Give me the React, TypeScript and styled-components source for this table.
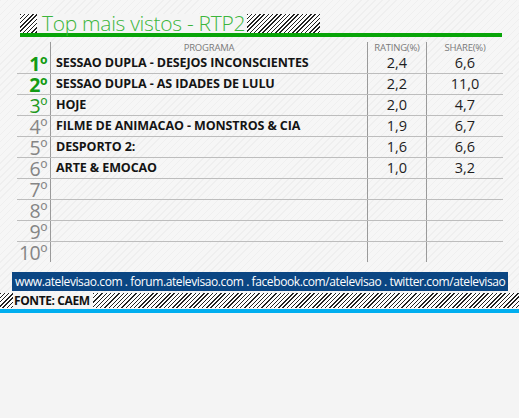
import styled, { createGlobalStyle } from 'styled-components';

const GlobalStyle = createGlobalStyle`
  body {
    margin: 0;
    background: #f4f4f4;
    font-family: 'Open Sans', 'DejaVu Sans', sans-serif;
  }
`;

const hatch = `repeating-linear-gradient(135deg, #222 0px, #222 1px, #fff 1px, #fff 3px)`;

const Page = styled.div`
  width: 519px;
  height: 418px;
  overflow: hidden;
  background: #f4f4f4;
`;

const Board = styled.div`
  padding-top: 14px;
  background: repeating-linear-gradient(135deg, #efefef 0px, #efefef 1px, #f6f6f6 1px, #f6f6f6 5px);
`;

const TitleBar = styled.div`
  display: flex;
  margin-left: 20px;
  width: 482px;
  height: 19px;
`;

const Hatch = styled.div<{ $w?: number }>`
  background: ${hatch};
  ${(p) => (p.$w ? `width: ${p.$w}px;` : 'flex: 1;')}
`;

const Gap = styled.div<{ $w: number }>`
  width: ${(p) => p.$w}px;
`;

const Title = styled.div`
  padding: 0 2px 0 5px;
  background: #f5f5f5;
  color: #3cb53c;
  font-weight: 300;
  font-size: 21px;
  line-height: 19px;
  letter-spacing: -0.3px;
  white-space: nowrap;
`;

const GreenLine = styled.div`
  margin-left: 20px;
  width: 482px;
  height: 4px;
  background: #08a508;
`;

const Table = styled.div`
  margin: 5px 0 0 17px;
  width: 486px;
`;

const Row = styled.div<{ $last?: boolean }>`
  display: grid;
  grid-template-columns: 33px 317px 59px 77px;
  border-bottom: ${(p) => (p.$last ? 'none' : '1px solid #bdbdbd')};
`;

const Cell = styled.div<{ $line?: boolean }>`
  display: flex;
  flex-direction: column;
  justify-content: flex-end;
  border-left: ${(p) => (p.$line ? '1px solid #9a9a9a' : 'none')};
`;

const HeadLabel = styled.div`
  height: 11px;
  font-size: 9.5px;
  line-height: 11px;
  color: #7a7a7a;
  text-align: center;
  letter-spacing: -0.2px;
`;

const Rank = styled.div<{ $tone: 'top' | 'mid' | 'rest' }>`
  height: 20px;
  line-height: 20px;
  padding-top: 1px;
  box-sizing: border-box;
  text-align: right;
  padding-right: 3px;
  font-size: 19.5px;
  letter-spacing: -0.5px;
  white-space: nowrap;
  font-weight: ${(p) => (p.$tone === 'top' ? 700 : 400)};
  color: ${(p) => (p.$tone === 'rest' ? '#858585' : p.$tone === 'top' ? '#139b13' : '#1f9a1f')};
`;

const Program = styled.div`
  height: 20px;
  line-height: 20px;
  padding-left: 5px;
  font-size: 12.5px;
  font-weight: 700;
  color: #141414;
  white-space: nowrap;
  letter-spacing: -0.1px;
`;

const Value = styled.div`
  height: 20px;
  line-height: 20px;
  text-align: center;
  font-size: 14.5px;
  color: #1e1e1e;
`;

const LinkBar = styled.div`
  margin: 10px 0 0 12px;
  width: 496px;
  height: 19px;
  background: #0b4683;
  color: #fff;
  font-size: 12px;
  line-height: 19px;
  letter-spacing: -0.4px;
  padding-left: 3px;
  box-sizing: border-box;
  white-space: nowrap;
  overflow: hidden;
`;

const SourceStrip = styled.div`
  display: flex;
  margin-top: 2px;
  height: 15px;
  background: ${hatch};
`;

const Source = styled.div`
  margin-left: 13px;
  width: 79px;
  padding-left: 1px;
  background: #f5f5f5;
  font-size: 12px;
  font-weight: 700;
  line-height: 15px;
  color: #111;
  letter-spacing: -0.4px;
`;

const CyanLine = styled.div`
  margin-top: 1px;
  height: 4px;
  background: #00aeef;
`;

type Entry = { name: string; rating: string; share: string };

const entries: Entry[] = [
  { name: 'SESSAO DUPLA - DESEJOS INCONSCIENTES', rating: '2,4', share: '6,6' },
  { name: 'SESSAO DUPLA - AS IDADES DE LULU', rating: '2,2', share: '11,0' },
  { name: 'HOJE', rating: '2,0', share: '4,7' },
  { name: 'FILME DE ANIMACAO - MONSTROS & CIA', rating: '1,9', share: '6,7' },
  { name: 'DESPORTO 2:', rating: '1,6', share: '6,6' },
  { name: 'ARTE & EMOCAO', rating: '1,0', share: '3,2' },
  { name: '', rating: '', share: '' },
  { name: '', rating: '', share: '' },
  { name: '', rating: '', share: '' },
  { name: '', rating: '', share: '' },
];

const toneFor = (i: number) => (i < 2 ? 'top' : i === 2 ? 'mid' : 'rest') as 'top' | 'mid' | 'rest';

const App = () => {
  return (
    <Page>
      <GlobalStyle />
      <Board>
        <TitleBar>
          <Hatch $w={17} />
          <Title>Top mais vistos - RTP2</Title>
          <Hatch $w={73} />
          <Gap $w={182} />
          <Hatch />
        </TitleBar>
        <GreenLine />
        <Table>
          {entries.map((e, i) => (
            <Row key={i} $last={i === entries.length - 1}>
              <Cell>
                <Rank $tone={toneFor(i)}>{i + 1}º</Rank>
              </Cell>
              <Cell $line>
                {i === 0 && <HeadLabel>PROGRAMA</HeadLabel>}
                <Program>{e.name}</Program>
              </Cell>
              <Cell $line>
                {i === 0 && <HeadLabel>RATING(%)</HeadLabel>}
                <Value>{e.rating}</Value>
              </Cell>
              <Cell $line>
                {i === 0 && <HeadLabel>SHARE(%)</HeadLabel>}
                <Value>{e.share}</Value>
              </Cell>
            </Row>
          ))}
        </Table>
        <LinkBar>
          www.atelevisao.com . forum.atelevisao.com . facebook.com/atelevisao . twitter.com/atelevisao
        </LinkBar>
        <SourceStrip>
          <Source>FONTE: CAEM</Source>
        </SourceStrip>
        <CyanLine />
      </Board>
    </Page>
  );
};

export default App;
